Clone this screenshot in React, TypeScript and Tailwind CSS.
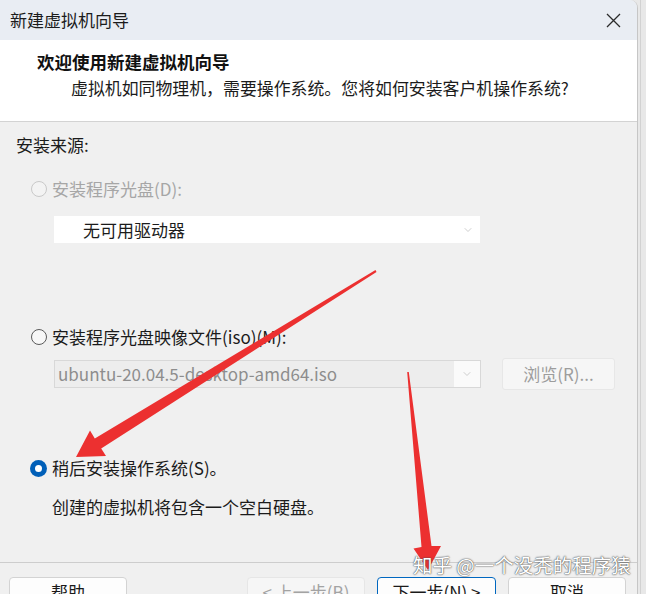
import { ChevronDown } from "lucide-react";

type RadioState = "disabled" | "off" | "on";

function Radio({ state }: { state: RadioState }) {
  if (state === "on") {
    return (
      <span className="w-[17px] h-[17px] rounded-full bg-[#005fb8] flex items-center justify-center shrink-0">
        <span className="w-[7px] h-[7px] rounded-full bg-white" />
      </span>
    );
  }
  return (
    <span
      className={`w-[16px] h-[16px] rounded-full border shrink-0 ${
        state === "disabled"
          ? "border-[#c9c9c9] bg-[#f3f3f3]"
          : "border-[#5a5a5a] bg-[#f7f7f7]"
      }`}
    />
  );
}

function FooterButton({
  label,
  kind,
  width,
}: {
  label: string;
  kind: "normal" | "disabled" | "primary";
  width: string;
}) {
  const look =
    kind === "primary"
      ? "border-[#0067c0] border-[1.5px] bg-[#fdfdfd] text-[#1a1a1a]"
      : kind === "disabled"
      ? "border-[#e6e6e6] bg-[#f6f6f6] text-[#a3a3a3]"
      : "border-[#d3d3d3] bg-[#fdfdfd] text-[#1a1a1a]";
  return (
    <div
      className={`${width} h-[32px] rounded-[4px] border flex justify-center text-[17px] leading-[24px] pt-[2px] ${look}`}
    >
      {label}
    </div>
  );
}

function Arrows() {
  return (
    <svg
      className="absolute inset-0 pointer-events-none"
      width="646"
      height="594"
      viewBox="0 0 646 594"
    >
      {/* arrow toward "install later" */}
      <polygon
        fill="#ec3030"
        points="376.5,271.9 101.2,448.4 106,456 76,457 90,430.6 94.8,438.4 375.5,270.1"
      />
      {/* arrow toward "next" */}
      <polygon
        fill="#ec3030"
        points="408.8,371.9 431.5,546 441,546 428,570 413.5,548.5 421.5,547 407.2,372.1"
      />
    </svg>
  );
}

export default function App() {
  return (
    <div className="relative w-[646px] h-[594px] overflow-hidden bg-[#e8e8e8] flex font-['Noto_Sans_CJK_SC','Microsoft_YaHei',sans-serif]">
      <div className="w-[638px] h-full shrink-0 flex flex-col bg-[#f0f0f0] border-r border-[#c6c6c6] rounded-tr-[8px] overflow-hidden">
        {/* Title bar */}
        <div className="h-[40px] shrink-0 bg-[#e9edf3] flex items-center justify-between pl-[10px] pr-[16px]">
          <span className="text-[17px] leading-[24px] text-[#1b1b1b]">
            新建虚拟机向导
          </span>
          <svg width="15" height="15" viewBox="0 0 15 15">
            <path
              d="M1 1L14 14M14 1L1 14"
              stroke="#2b2b2b"
              strokeWidth="1.3"
              fill="none"
            />
          </svg>
        </div>

        {/* Header */}
        <div className="h-[82px] shrink-0 bg-white border-b border-[#d3d3d3] pt-[10px]">
          <div className="pl-[37px] text-[17.5px] leading-[24px] font-bold text-[#111]">
            欢迎使用新建虚拟机向导
          </div>
          <div className="pl-[71px] mt-[2px] text-[16.9px] leading-[24px] text-[#1b1b1b]">
            虚拟机如同物理机，需要操作系统。您将如何安装客户机操作系统?
          </div>
        </div>

        {/* Body */}
        <div className="h-[440px] shrink-0 flex flex-col text-[17px] leading-[24px] text-[#1b1b1b]">
          <div className="pl-[16px] pt-[11px] h-[35px]">安装来源:</div>

          <div className="mt-[20px] h-[24px] pl-[31px] flex items-center gap-[5px]">
            <Radio state="disabled" />
            <span className="text-[#a6a6a6]">安装程序光盘(D):</span>
          </div>

          <div className="mt-[15px] ml-[54px] w-[426px] h-[27px] bg-white flex items-center justify-between pl-[29px] pr-[6px]">
            <span>无可用驱动器</span>
            <ChevronDown className="w-3 h-3 text-[#bdbdbd]" strokeWidth={1.5} />
          </div>

          <div className="mt-[82px] h-[24px] pl-[31px] flex items-center gap-[5px]">
            <Radio state="off" />
            <span>安装程序光盘映像文件(iso)(M):</span>
          </div>

          <div className="mt-[9px] h-[32px] flex items-center">
            <div className="ml-[54px] w-[427px] h-[28px] border border-[#d8d8d8] bg-[#ededed] flex items-stretch">
              <span className="flex-1 pl-[3px] flex items-center text-[#8d8d8d]">
                ubuntu-20.04.5-desktop-amd64.iso
              </span>
              <span className="w-[26px] bg-[#fafafa] flex items-center justify-center">
                <ChevronDown
                  className="w-3 h-3 text-[#bdbdbd]"
                  strokeWidth={1.5}
                />
              </span>
            </div>
            <div className="ml-[21px] w-[113px] h-[32px] rounded-[3px] border border-[#e7e7e7] bg-[#f6f6f6] flex items-center justify-center text-[#9d9d9d]">
              浏览(R)...
            </div>
          </div>

          <div className="mt-[66px] h-[24px] pl-[30px] flex items-center gap-[5px]">
            <Radio state="on" />
            <span>稍后安装操作系统(S)。</span>
          </div>

          <div className="mt-[15px] h-[24px] pl-[52px]">
            创建的虚拟机将包含一个空白硬盘。
          </div>
        </div>

        {/* Footer */}
        <div className="flex-1 border-t border-[#cdcdcd] pt-[14px] flex items-start pl-[9px] pr-[11px]">
          <FooterButton label="帮助" kind="normal" width="w-[118px]" />
          <div className="ml-auto flex gap-[12px]">
            <FooterButton label="< 上一步(B)" kind="disabled" width="w-[118px]" />
            <FooterButton label="下一步(N) >" kind="primary" width="w-[119px]" />
            <FooterButton label="取消" kind="normal" width="w-[118px]" />
          </div>
        </div>
      </div>

      <div className="flex-1 h-full pl-[2px]">
        <div className="h-full border-l border-[#d2d2d2]" />
      </div>

      <Arrows />

      <div className="absolute left-[413px] top-[553px] text-[19.5px] leading-[24px] text-white whitespace-nowrap [text-shadow:0_0_1px_#3a3a3a,0_0_2px_#5a5a5a]">
        知乎 @一个没秃的程序猿
      </div>
    </div>
  );
}
